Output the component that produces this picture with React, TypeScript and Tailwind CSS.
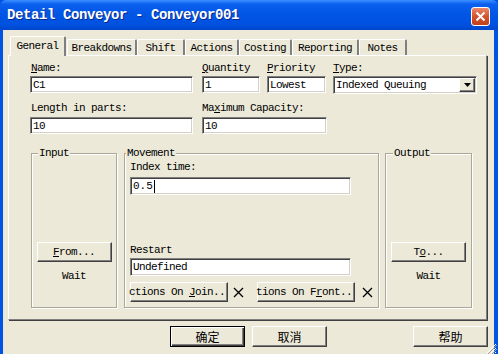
import React from 'react'

const sunken =
  'bg-white border border-t-[#808080] border-l-[#808080] border-r-white border-b-white shadow-[inset_1px_1px_0_#404040,inset_-1px_-1px_0_#D4D0C8]'
const raised =
  'bg-[#ECE9D8] border border-t-white border-l-white border-r-[#404040] border-b-[#404040] shadow-[inset_-1px_-1px_0_#808080]'
const group =
  'relative border border-[#ACA899] shadow-[inset_1px_1px_0_#fff,1px_1px_0_#fff]'

function U({ c }: { c: string }) {
  return <span className="underline underline-offset-[1px]">{c}</span>
}

function Cross() {
  return (
    <svg width="11" height="11" viewBox="0 0 11 11" className="shrink-0">
      <path d="M1 1 L10 10 M10 1 L1 10" stroke="#000" strokeWidth="1.3" fill="none" />
    </svg>
  )
}

function Field({ w, h = 17, children }: { w: string; h?: number; children?: React.ReactNode }) {
  return (
    <div className={`${sunken} ${w} ${h === 17 ? 'h-[17px]' : 'h-[18px]'} flex items-center pl-[2px] leading-[12px] overflow-hidden whitespace-nowrap`}>
      {children}
    </div>
  )
}

const tabs = [
  { label: 'Breakdowns', w: 'w-[70px]' },
  { label: 'Shift', w: 'w-[48px]' },
  { label: 'Actions', w: 'w-[54px]' },
  { label: 'Costing', w: 'w-[53px]' },
  { label: 'Reporting', w: 'w-[67px]' },
  { label: 'Notes', w: 'w-[48px]' },
]

export default function App() {
  return (
    <div className="w-[498px] h-[354px] overflow-hidden bg-[#0054E3] flex flex-col font-['Liberation_Mono',monospace] text-[11px] tracking-[-0.6px] text-black relative">
      {/* title bar */}
      <div className="h-[30px] shrink-0 flex items-center justify-between pl-[7px] pr-[8px] rounded-t-[6px] bg-[linear-gradient(180deg,#3C8FFF_0%,#0A5FEF_14%,#0055E5_50%,#0052E0_80%,#0046CC_100%)]">
        <span className="text-white font-bold text-[14px] tracking-[-0.4px] [text-shadow:1px_1px_0_#0A2A8A] mt-[1px]">
          Detail Conveyor - Conveyor001
        </span>
        <div className="w-[19px] h-[19px] rounded-[3px] border border-white bg-[linear-gradient(180deg,#E8886A_0%,#D4532E_50%,#C2401C_100%)] flex items-center justify-center mt-[2px]">
          <svg width="11" height="11" viewBox="0 0 11 11">
            <path d="M1.5 1.5 L9.5 9.5 M9.5 1.5 L1.5 9.5" stroke="#fff" strokeWidth="2" fill="none" />
          </svg>
        </div>
      </div>

      {/* body */}
      <div className="flex-1 ml-[3px] mr-[4px] bg-[#ECE9D8] flex flex-col">
        {/* tabs */}
        <div className="pt-[6px] pl-[7px] flex items-end h-[25px]">
          <div className="relative z-10 w-[56px] h-[20px] -mb-[1px] bg-[#ECE9D8] border-t border-l border-white border-r-[2px] border-r-[#808080] rounded-t-[2px] flex items-start justify-center pt-[3px] leading-[12px]">
            General
          </div>
          <div className="flex items-end ml-[1px]">
            {tabs.map((t) => (
              <div
                key={t.label}
                className={`${t.w} h-[16px] border-t border-l border-white border-r-[2px] border-r-[#808080] rounded-t-[2px] flex items-start justify-center pt-[2px] leading-[12px]`}
              >
                {t.label}
              </div>
            ))}
          </div>
        </div>

        {/* panel */}
        <div className="ml-[5px] w-[479px] h-[265px] border-t border-l border-white border-r border-b border-r-[#808080] border-b-[#808080] shadow-[1px_1px_0_#404040] pt-[6px] pl-[21px] flex flex-col">
          {/* row 1 */}
          <div className="flex">
            <div className="flex flex-col w-[163px]">
              <div className="leading-[12px] pl-[1px]"><U c="N" />ame:</div>
              <div className="mt-[2px]"><Field w="w-[163px]">C1</Field></div>
            </div>
            <div className="flex flex-col ml-[9px] w-[58px]">
              <div className="leading-[12px]"><U c="Q" />uantity</div>
              <div className="mt-[2px]"><Field w="w-[58px]">1</Field></div>
            </div>
            <div className="flex flex-col ml-[7px] w-[59px]">
              <div className="leading-[12px]"><U c="P" />riority</div>
              <div className="mt-[2px]"><Field w="w-[59px]">Lowest</Field></div>
            </div>
            <div className="flex flex-col ml-[7px] w-[144px]">
              <div className="leading-[12px]"><U c="T" />ype:</div>
              <div className="mt-[2px]">
                <div className={`${sunken} w-[144px] h-[18px] flex items-center pl-[2px] pr-[1px] leading-[12px]`}>
                  <span className="flex-1">Indexed Queuing</span>
                  <div className={`${raised} w-[16px] h-[14px] flex items-center justify-center`}>
                    <svg width="7" height="4" viewBox="0 0 7 4"><path d="M0 0 H7 L3.5 4 Z" fill="#000" /></svg>
                  </div>
                </div>
              </div>
            </div>
          </div>

          {/* row 2 */}
          <div className="flex mt-[8px]">
            <div className="flex flex-col w-[163px]">
              <div className="leading-[12px] pl-[1px]">Length in parts:</div>
              <div className="mt-[3px]"><Field w="w-[163px]">10</Field></div>
            </div>
            <div className="flex flex-col ml-[9px] w-[125px]">
              <div className="leading-[12px]">Ma<U c="x" />imum Capacity:</div>
              <div className="mt-[3px]"><Field w="w-[125px]">10</Field></div>
            </div>
          </div>

          {/* groups */}
          <div className="flex mt-[19px] ml-[1px]">
            <div className={`${group} w-[86px] h-[155px] flex flex-col items-center pt-[88px]`}>
              <span className="absolute -top-[7px] left-[6px] px-[1px] bg-[#ECE9D8] leading-[12px]">Input</span>
              <div className={`${raised} w-[75px] h-[20px] flex items-center justify-center leading-[12px]`}>
                <span><U c="F" />rom...</span>
              </div>
              <div className="mt-[8px] leading-[12px]">Wait</div>
            </div>

            <div className={`${group} ml-[7px] w-[255px] h-[155px] flex flex-col pl-[5px] pt-[7px]`}>
              <span className="absolute -top-[7px] left-[1px] px-[1px] bg-[#ECE9D8] leading-[12px]">Movement</span>
              <div className="leading-[12px]">Index time:</div>
              <div className="mt-[4px]">
                <Field w="w-[221px]" h={18}>
                  <span className="tracking-[0px]">0.5</span>
                  <span className="w-[1px] h-[13px] bg-black ml-[1px]" />
                </Field>
              </div>
              <div className="mt-[49px] leading-[12px]">Restart</div>
              <div className="mt-[2px]">
                <Field w="w-[221px]" h={18}>Undefined</Field>
              </div>
              <div className="flex items-center mt-[6px]">
                <div className={`${raised} w-[98px] h-[20px] flex items-center justify-end pr-[2px] whitespace-nowrap leading-[12px]`}>
                  <span>ctions On <U c="J" />oin..</span>
                </div>
                <div className="ml-[5px]"><Cross /></div>
                <div className={`${raised} ml-[13px] w-[98px] h-[20px] flex items-center justify-end pr-[2px] whitespace-nowrap leading-[12px]`}>
                  <span>tions On F<U c="r" />ont..</span>
                </div>
                <div className="ml-[7px]"><Cross /></div>
              </div>
            </div>

            <div className={`${group} ml-[6px] w-[87px] h-[155px] flex flex-col items-center pt-[88px]`}>
              <span className="absolute -top-[7px] left-[7px] px-[1px] bg-[#ECE9D8] leading-[12px]">Output</span>
              <div className={`${raised} w-[75px] h-[20px] flex items-center justify-center leading-[12px]`}>
                <span>T<U c="o" />...</span>
              </div>
              <div className="mt-[8px] leading-[12px]">Wait</div>
            </div>
          </div>
        </div>

        {/* dialog buttons */}
        <div className="flex mt-[6px] pl-[167px] pr-[6px] font-['Noto_Sans_CJK_SC',sans-serif] text-[12px] tracking-normal">
          <div className="w-[75px] h-[21px] border border-black bg-[#ECE9D8] shadow-[inset_1px_1px_0_#fff,inset_-1px_-1px_0_#404040,inset_-2px_-2px_0_#808080] flex items-center justify-center leading-[14px]">
            确定
          </div>
          <div className={`${raised} ml-[7px] w-[75px] h-[21px] flex items-center justify-center leading-[14px]`}>
            取消
          </div>
          <div className="flex-1" />
          <div className={`${raised} w-[75px] h-[21px] flex items-center justify-center leading-[14px]`}>
            帮助
          </div>
        </div>
      </div>

      {/* resize grip */}
      <svg className="absolute right-[1px] bottom-0" width="12" height="12" viewBox="0 0 12 12">
        <path d="M11 2 L2 11 M11 6 L6 11 M11 10 L10 11" stroke="#fff" strokeWidth="1" />
        <path d="M12 3 L3 12 M12 7 L7 12" stroke="#A0A0A0" strokeWidth="1" />
      </svg>
    </div>
  )
}
